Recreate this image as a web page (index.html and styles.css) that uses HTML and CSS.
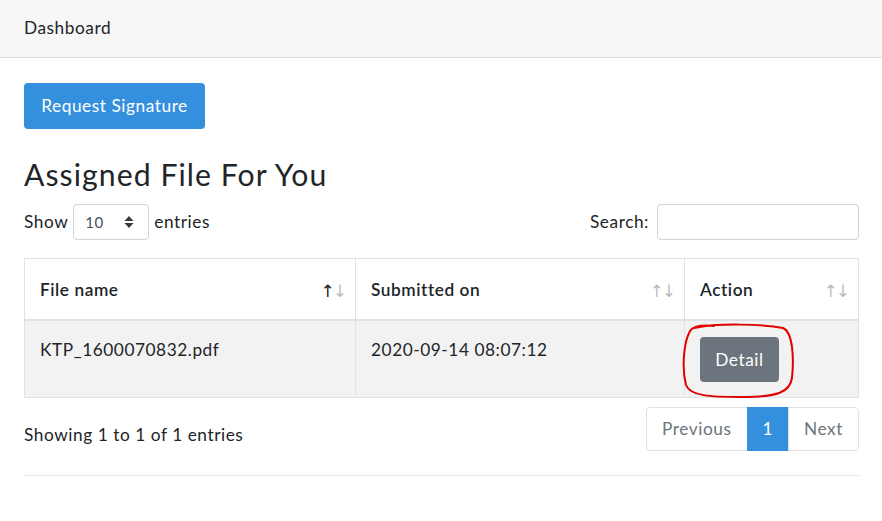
FILE: index.html
```html
<!DOCTYPE html>
<html>
<head>
<meta charset="utf-8">
<link rel="stylesheet" href="styles.css">
</head>
<body>
<div class="card">
  <div class="card-header">Dashboard</div>
  <div class="card-body">
    <button class="btn btn-primary">Request Signature</button>
    <h3 class="title">Assigned File For You</h3>
    <div class="dt-top">
      <label class="dt-length">Show
        <span class="select"><span class="select-val">10</span>
          <svg class="select-arrows" width="10" height="14" viewBox="0 0 10 14"><path d="M5 1 L9.5 6 H0.5 Z M5 13 L9.5 8 H0.5 Z" fill="#343a40"/></svg>
        </span>
        entries</label>
      <label class="dt-search">Search: <span class="search-input"></span></label>
    </div>
    <table class="dt">
      <thead>
        <tr>
          <th class="c1"><span>File name</span><span class="sort"><span class="up on">↑</span><span class="down">↓</span></span></th>
          <th class="c2"><span>Submitted on</span><span class="sort"><span class="up">↑</span><span class="down">↓</span></span></th>
          <th class="c3"><span>Action</span><span class="sort"><span class="up">↑</span><span class="down">↓</span></span></th>
        </tr>
      </thead>
      <tbody>
        <tr>
          <td>KTP_1600070832.pdf</td>
          <td>2020-09-14 08:07:12</td>
          <td><span class="mark-wrap"><button class="btn btn-secondary">Detail</button>
            <svg class="mark" width="115" height="78" viewBox="0 0 115 78"><path d="M12 6 C 35 1, 80 2, 101 6 C 111 10, 112 36, 110 56 C 108 70, 96 75, 60 75 C 28 75, 8 74, 4 63 C 0 48, 1 22, 8 9 C 12 3, 22 3, 32 4" fill="none" stroke="#e00000" stroke-width="2" stroke-linecap="round"/></svg></span></td>
        </tr>
      </tbody>
    </table>
    <div class="dt-bottom">
      <div class="dt-info">Showing 1 to 1 of 1 entries</div>
      <ul class="pagination">
        <li class="page disabled">Previous</li>
        <li class="page active">1</li>
        <li class="page">Next</li>
      </ul>
    </div>
    <hr class="rule">
  </div>
</div>
</body>
</html>
```

FILE: styles.css
```css
* { box-sizing: border-box; }
body {
  margin: 0;
  font-family: "Lato", "Noto Sans", sans-serif;
  font-size: 17.28px;
  line-height: 1.5;
  letter-spacing: 0.55px;
  color: #212529;
  background: #fff;
}
.card-header {
  background: #f7f7f7;
  border-bottom: 1px solid #dcdcdc;
  padding: 15px 24px 15px;
  height: 58px;
  line-height: 26px;
}
.card-body {
  padding: 25px 23px 0 24px;
}
.btn {
  font-family: inherit;
  font-size: 17.28px;
  letter-spacing: 0.55px;
  line-height: 26px;
  border: none;
  border-radius: 4px;
  padding: 10px 16px;
  color: #fff;
  cursor: pointer;
}
.btn-primary { background: #3490dc; width: 181px; }
.btn-secondary { background: #6c757d; width: 79px; height: 45px; padding: 0; }
.title {
  font-size: 30.2px;
  font-weight: 400;
  line-height: 36px;
  letter-spacing: 1.05px;
  margin: 27px 0 12px;
}
.dt-top {
  display: flex;
  justify-content: space-between;
  align-items: center;
  height: 36px;
}
.dt-length, .dt-search {
  display: flex;
  align-items: center;
  gap: 5px;
}
.select {
  display: inline-flex;
  align-items: center;
  justify-content: space-between;
  width: 76px;
  height: 36px;
  border: 1px solid #ced4da;
  border-radius: 4px;
  padding: 0 14px 0 11px;
  font-size: 15px;
  color: #495057;
}
.search-input {
  display: inline-block;
  width: 202px;
  height: 36px;
  border: 1px solid #ced4da;
  border-radius: 4px;
  margin-left: 3px;
}
.dt {
  width: 100%;
  border-collapse: collapse;
  margin-top: 18px;
}
.dt th, .dt td {
  border: 1px solid #dee2e6;
  text-align: left;
  vertical-align: top;
}
.dt th {
  font-weight: 600;
  padding: 17px 15px 16px;
  border-bottom: 2px solid #dee2e6;
  position: relative;
  line-height: 27px;
}
.dt td {
  padding: 16px 15px 15px;
  background: #f2f2f2;
  line-height: 26px;
}
.c1 { width: 331px; }
.c2 { width: 329px; }
.sort {
  position: absolute;
  right: 10px;
  top: 19px;
  font-weight: 400;
  font-size: 17px;
  letter-spacing: -2px;
  font-family: "DejaVu Sans", sans-serif;
  color: #212529;
}
.sort span { opacity: 0.3; }
.sort span.on { opacity: 1; }
.mark-wrap {
  position: relative;
  display: inline-block;
  vertical-align: top;
}
.mark {
  position: absolute;
  left: -18px;
  top: -15px;
}
.dt-bottom {
  display: flex;
  justify-content: space-between;
  align-items: flex-start;
  margin-top: 9px;
}
.dt-info {
  padding-top: 15px;
  line-height: 26px;
}
.pagination {
  display: flex;
  list-style: none;
  margin: 0;
  padding: 0;
}
.page {
  height: 44px;
  line-height: 42px;
  padding: 0 15px;
  border: 1px solid #dee2e6;
  color: #6c757d;
  margin-left: -1px;
}
.page:first-child { border-radius: 4px 0 0 4px; }
.page:last-child { border-radius: 0 4px 4px 0; }
.page.active { background: #3490dc; border-color: #3490dc; color: #fff; }
.rule {
  border: 0;
  border-top: 1px solid #e5e5e5;
  margin: 24px 0 0;
}
```
